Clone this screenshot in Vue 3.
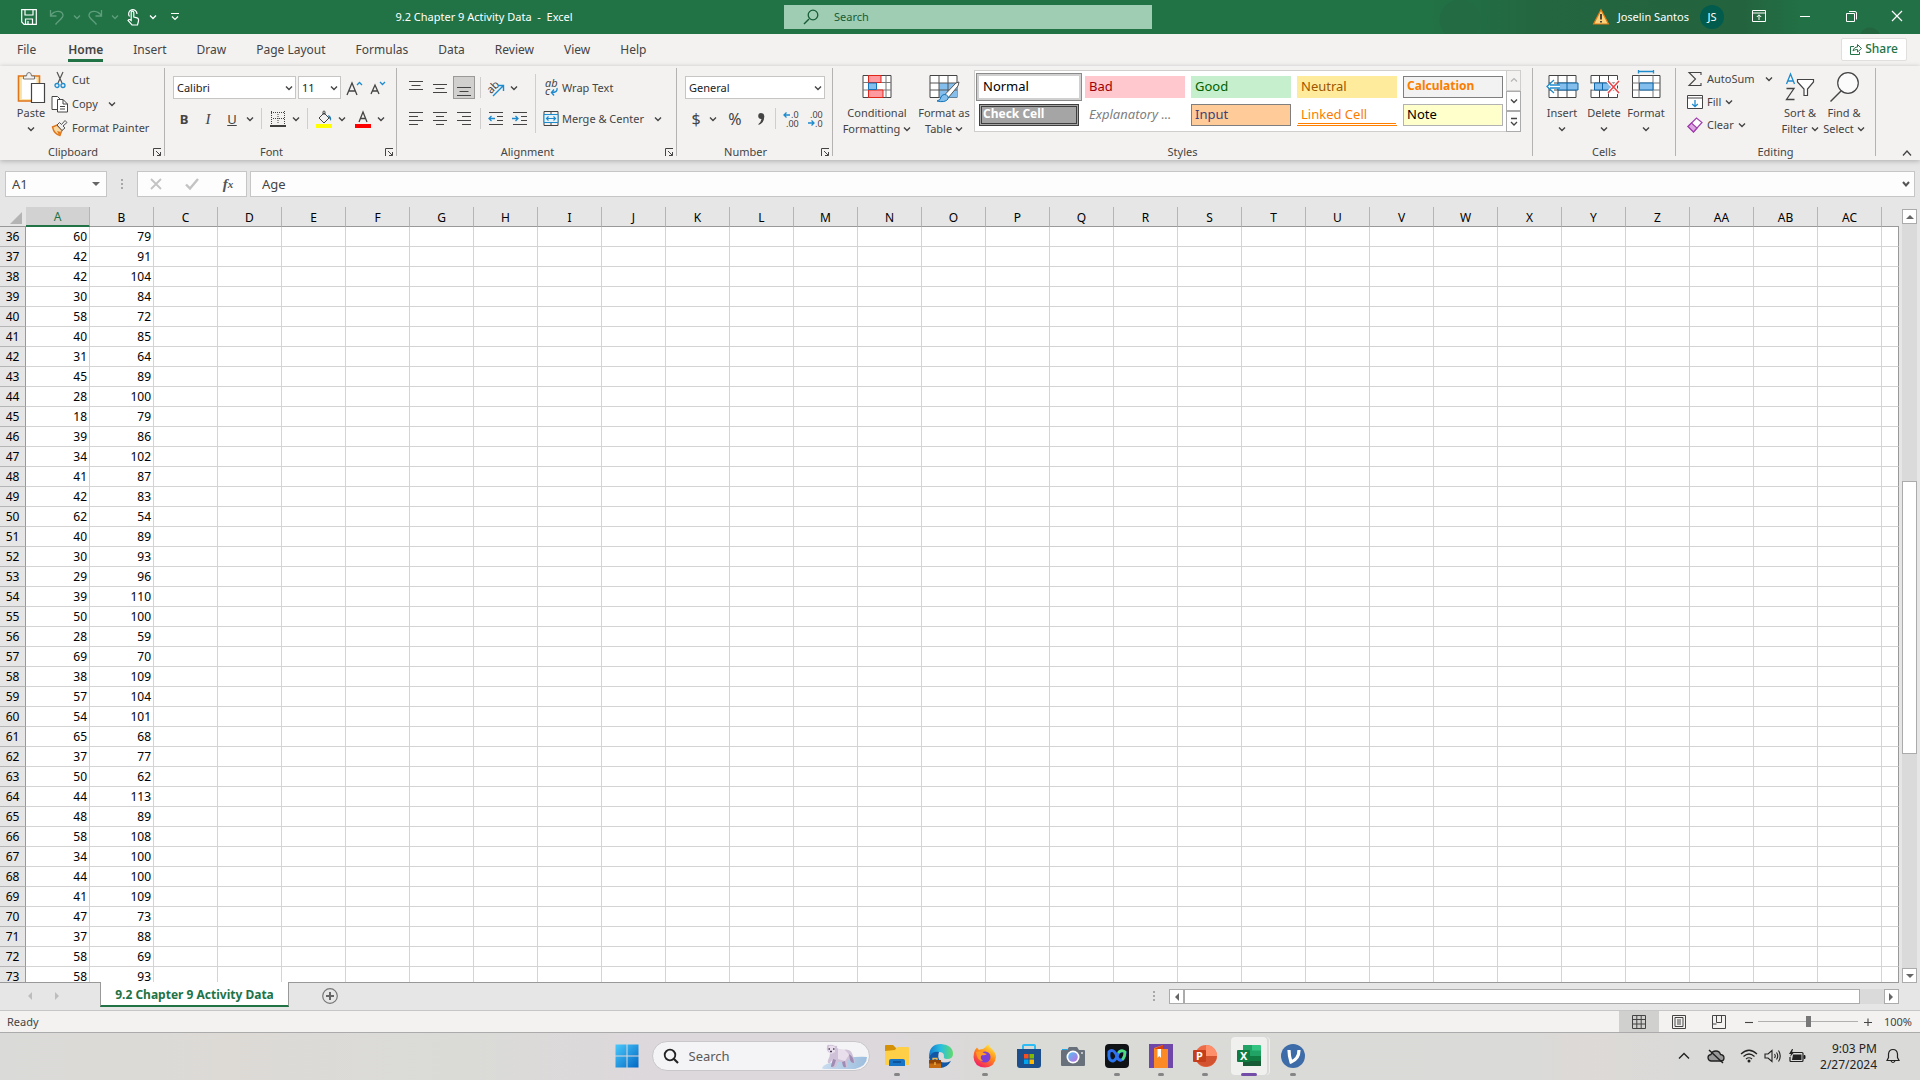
<script setup>
import { ref, h } from 'vue'

const K = '#444444'
const B = '#1e8bcd'
const line = (d, c = K, w = 1, extra = '') => `<path d="${d}" fill="none" stroke="${c}" stroke-width="${w}" ${extra}/>`

// Each icon is [width, height, svg markup].
const icons = {
  chev: [8, 8, line('M1 2.500L4 5.500L7 2.500', K, 1.4)],
  chevUp: [8, 8, line('M1 5.500L4 2.500L7 5.500', '#b5b5b5', 1.2)],
  chevMore: [8, 10, line('M1 1.500H7M1 5L4 8L7 5', K, 1.3)],
  save: [16, 16, line('M.7 .7H15.300V15.300H3L.7 13ZM4 .7V6H12V.7M4.500 15V10H11.500V15M7 12V15', '#fff', 1.2)],
  undo: [16, 16, line('M1.500 1V7H7.500M1.500 7C5 1 13 1 14 6C14.500 9 9 12 6.500 15.500', '#5f9e7c', 1.3)],
  redo: [16, 16, line('M14.500 1V7H8.500M14.500 7C11 1 3 1 2 6C1.500 9 7 12 9.500 15.500', '#5f9e7c', 1.3)],
  touch: [14, 18, line('M3.500 8.500A4.200 4.200 0 1 1 11 6M5.200 11V4.500A1.300 1.300 0 0 1 7.800 4.500V9L11 9.800Q13 10.500 12.500 13L11.500 17H6L2 12.500Q3 10.500 5.200 12.500V11', '#fff', 1.2)],
  chevW: [8, 8, line('M1 2.500L4 5.500L7 2.500', '#fff', 1.3)],
  chevDim: [8, 8, line('M1 2.500L4 5.500L7 2.500', '#5f9e7c', 1.3)],
  custom: [8, 10, line('M0 1.500H8M1 4.500L4 7.500L7 4.500', '#fff', 1.2)],
  searchG: [16, 16, line('M6 10L1 15', '#185c37', 1.4) + '<circle cx="10" cy="6" r="4.800" fill="none" stroke="#185c37" stroke-width="1.300"/>'],
  warn: [16, 16, '<path d="M8 .8L15.400 15H.6Z" fill="#fbd27a" stroke="#e07a14" stroke-width="1.200"/><path d="M8 5V10.500M8 12V13.500" stroke="#333" stroke-width="1.800"/>'],
  ribbonOpt: [14, 12, line('M.5 .5H13.500V11.500H.5ZM.5 3H13.500M7 10V5M4.800 7L7 4.800L9.200 7', '#fff')],
  min: [10, 10, line('M0 5.500H10', '#fff')],
  restore: [11, 11, line('M.5 2.500H8.500V10.500H.5ZM3 .5H9Q10.500 .5 10.500 2V8.500', '#fff')],
  close: [10, 10, line('M0 0L10 10M10 0L0 10', '#fff', 1.2)],
  share: [12, 12, line('M4 3.500H.5V11.500H9.500V9M3 8C3.500 5 5.500 4 7.500 4V1.500L11.500 5.500L7.500 9V6.500C5.500 6.500 4 7 3 8Z', '#217346')],
  paste: [28, 32, '<path d="M1.500 5H22.500V30H1.500Z" fill="#fbe3ac" stroke="#e0761a" stroke-width="1.600"/><path d="M5 8H19.500V28H5Z" fill="#fff"/><path d="M6.500 8V5H9.500Q9.500 1.500 12 1.500T14.500 5H17.500V8Z" fill="#f3f2f1" stroke="#777"/><path d="M14.500 12.500H27.500V31.500H14.500Z" fill="#fff" stroke="#444" stroke-width="1.200"/>'],
  cut: [14, 18, line('M4 1L9 12M10 1L5 12', '#555', 1.2) + '<circle cx="4" cy="14.500" r="2" fill="none" stroke="#1e8bcd" stroke-width="1.300"/><circle cx="10" cy="14.500" r="2" fill="none" stroke="#1e8bcd" stroke-width="1.300"/>'],
  copy: [18, 18, '<path d="M1 1.500H6.500L9.500 4.500V14.500H1Z" fill="#fff" stroke="#444"/><path d="M6.500 4.500H12L16.500 9V17H6.500Z" fill="#fff" stroke="#444"/><path d="M12 4.500V9H16.500M9 11.500H14M9 14H14" fill="none" stroke="#444"/>'],
  painter: [18, 18, '<path d="M1.500 8L6 6L11 11L9 16.500Q3 15 1.500 8Z" fill="#fbd9a0" stroke="#e0761a" stroke-width="1.400"/><path d="M6 12L8 16L10 13Z" fill="#e0761a"/><path d="M6 6L8.500 3.500L10.500 5.500L14 1.500L16 3.500L12 7L14 9L11 11.500Z" fill="#eee" stroke="#555"/>'],
  launch: [10, 10, line('M1.500 9V1.500H9M4 4L8.500 8.500M8.500 5V8.500H5')],
  growA: [16, 16, line('M1 15L6 3L11 15M3 11H9', K, 1.3) + line('M11 5L13.500 2.500L16 5', B, 1.3)],
  shrinkA: [16, 16, line('M1 14L5 5L9 14M2.500 11H7.500', K, 1.3) + line('M10 2L12.500 4.500L15 2', B, 1.3)],
  borders: [16, 16, line('M1.500 0V14M14.500 0V14M1 1.500H15M8 3V13M3 7.500H14', K, 1, 'stroke-dasharray="1 1"') + line('M0 15H16', '#111', 1.6)],
  fill: [18, 18, line('M4 8L9 3L14 8L9 13ZM8 5V2Q8 1 9 1T10 2V5') + '<path d="M13 5Q17 6 16 11L14 8Z" fill="#1e78b4"/><path d="M1 14H17V18H1Z" fill="#ffff00"/>'],
  fontColor: [18, 18, line('M5 12L9 2L13 12M6.500 8.500H11.500', K, 1.3) + '<path d="M1 14H17V18H1Z" fill="#f00"/>'],
  alTop: [16, 16, line('M1 1.500H15M3.500 5.500H12.500M1 9.500H15')],
  alMid: [16, 16, line('M1 4.500H15M3.500 8.500H12.500M1 12.500H15')],
  alBot: [16, 16, line('M1 7.500H15M3.500 11.500H12.500M1 15.500H15')],
  alL: [16, 16, line('M1 1.500H15M1 5.500H10M1 9.500H15M1 13.500H10')],
  alC: [16, 16, line('M1 1.500H15M4 5.500H12M1 9.500H15M4 13.500H12')],
  alR: [16, 16, line('M1 1.500H15M6 5.500H15M1 9.500H15M6 13.500H15')],
  outdent: [16, 16, line('M1 1.500H15M9 5.500H15M9 9.500H15M1 13.500H15') + line('M7 7.500H1M3.500 5L1 7.500L3.500 10', B, 1.3)],
  indent: [16, 16, line('M1 1.500H15M9 5.500H15M9 9.500H15M1 13.500H15') + line('M0 7.500H6M3.500 5L6 7.500L3.500 10', B, 1.3)],
  orient: [18, 18, '<text x="0" y="12" font-size="11" fill="#444" transform="rotate(-45 6 9)" font-family="Noto Sans">ab</text>' + line('M6 17L16 7M11 6.500H16.500V12', B, 1.4)],
  wrap: [18, 20, '<text font-size="11" fill="#444" font-family="Noto Sans"><tspan x="3" y="9">ab</tspan><tspan x="3" y="17">c</tspan></text>' + line('M15 10Q16 14.500 9.500 14.500M12 11.500L9.500 14.500L12 17.500', B, 1.4)],
  merge: [18, 18, line('M2 1.500H16V15.500H2ZM9 1.500V5M9 12V15.500') + '<path d="M2 4.500H16V12.500H2Z" fill="#e6f2fa" stroke="#1e8bcd"/>' + line('M4.500 8.500H13.500M6.500 6.500L4.500 8.500L6.500 10.500M11.500 6.500L13.500 8.500L11.500 10.500', B, 1.2)],
  comma: [10, 16, '<path d="M5 2A3 3 0 1 0 5.500 8Q5 11 2.500 13V14Q8.500 12 8.300 5Q8 2 5 2Z" fill="#444"/>'],
  decUp: [18, 18, line('M8 5H2M4.500 2.500L2 5L4.500 7.500', B, 1.3) + '<text font-size="9" fill="#444" font-family="Noto Sans"><tspan x="9" y="8">.0</tspan><tspan x="4" y="17">.00</tspan></text>'],
  decDn: [18, 18, line('M2 13H8M5.500 10.500L8 13L5.500 15.500', B, 1.3) + '<text font-size="9" fill="#444" font-family="Noto Sans"><tspan x="4" y="8">.00</tspan><tspan x="9" y="17">.0</tspan></text>'],
  condFmt: [32, 32, '<path d="M2 4.500H30V26.500H2Z" fill="#fff" stroke="#444"/><path d="M2 11.500H30M2 19H30M25 4.500V26.500M7.500 4.500V26.500" stroke="#777" fill="none"/><path d="M7.500 4.500H20V11.500H7.500ZM7.500 19H22V26.500H7.500Z" fill="#ff9aa0" stroke="#e0251b"/><path d="M7.500 12H15.500V18.500H7.500Z" fill="#83beec" stroke="#1273b8"/>'],
  fmtTable: [32, 32, '<path d="M2 4.500H29V26.500H2Z" fill="#fff" stroke="#444"/><path d="M11 12H29V26.500H11Z" fill="#83beec"/><path d="M2 12H29M2 19H29M11 4.500V26.500M20 4.500V26.500" stroke="#555" fill="none"/><path d="M28 12L31 11L30 15L20 27L16.500 24Z" fill="#fff" stroke="#555"/><path d="M16.500 23.500Q21 24 20 28Q17 32 9 30Q13 29 13 26Q14 23.500 16.500 23.500Z" fill="#83beec" stroke="#1273b8"/>'],
  insert: [34, 32, '<path d="M4 4.500H31V26.500H4Z" fill="#fff" stroke="#444"/><path d="M13 4.500V26.500M22 4.500V26.500M4 12H31M4 19H31" stroke="#444" fill="none"/><path d="M13 12H33V19H13Z" fill="#83beec" stroke="#0f66a8"/><path d="M22 12V19" stroke="#0f66a8"/><path d="M2 15.500L9 9V13.500H15V17.500H9V22Z" fill="#fff"/>' + line('M15 14H5M15 17H5M9 9L2 15.500L9 22', B, 1.3)],
  del: [32, 32, '<path d="M3 4.500H29.500V26.500H3Z" fill="#fff" stroke="#444"/><path d="M11.500 4.500V26.500M20.500 4.500V26.500M3 12H29M3 19H29" stroke="#444" fill="none"/><path d="M0 12.500H6V18.500H0Z" fill="#f3f2f1"/><path d="M6.500 12H23V19H6.500Z" fill="#83beec" stroke="#0f66a8"/><path d="M14.500 12V19" stroke="#0f66a8"/><path d="M20 10L31 22M31 10L20 22" stroke="#fff" stroke-width="4"/>' + line('M20 10L31 22M31 10L20 22', '#e8474a', 1.6)],
  fmtCells: [32, 32, '<path d="M2.500 4.500H30V26.500H2.500Z" fill="#fff" stroke="#444"/><path d="M9 4.500V26.500M23 4.500V26.500M2.500 12H30M2.500 19H30" stroke="#777" fill="none"/><path d="M9.500 12H23V19H9.500Z" fill="#83beec" stroke="#0f66a8"/>' + line('M8.500 .5H23.500M8.500 -1V2.500M23.500 -1V2.500', B, 1.3)],
  sum: [16, 16, line('M14 4V1.500H2L8.500 8L2 14.500H14V12', K, 1.1)],
  fillDn: [16, 16, '<path d="M.5 1.500H15.500V14.500H.5Z" fill="#fff" stroke="#444"/><path d="M.5 4H15.500" stroke="#444"/>' + line('M8 6V12.500M5.200 10L8 12.700L10.800 10', B, 1.3)],
  clear: [16, 16, '<path d="M1 9.500L9.500 1L15 5.500L6.500 15Z" fill="#fff" stroke="#a33fae" stroke-width="1.200"/><path d="M1 9.500L4.500 6L10 11L6.500 15Z" fill="#dba7e0" stroke="#a33fae" stroke-width="1.200"/>'],
  sort: [32, 32, line('M2.500 13L6.500 3L10.500 13M4 10H9', B, 1.3) + line('M2.500 17.500H10L2.500 28.500H10.500', K, 1.3) + '<path d="M13.500 8.500H29.500V11L23.500 18V24.500H20V18L13.500 11Z" fill="#fff" stroke="#444" stroke-width="1.200"/>'],
  find: [32, 32, '<circle cx="20" cy="12" r="10.300" fill="#fbfbfb" stroke="#444" stroke-width="1.200"/>' + line('M13 20L2.500 30.500', K, 1.4)],
  caretUp: [10, 8, line('M1 6.500L5 2L9 6.500', K, 1.3)],
  nameCaret: [8, 6, '<path d="M0 1H8L4 5Z" fill="#666"/>'],
  cancel: [12, 12, line('M1 1L11 11M11 1L1 11', '#c3c3c3', 1.8)],
  check: [14, 12, line('M1 6.500L5 10.500L13 1', '#c3c3c3', 2.4)],
  fbChev: [8, 8, line('M1 2L4 5.500L7 2', '#555', 2)],
  triU: [8, 6, '<path d="M0 5H8L4 1Z" fill="#666"/>'],
  triD: [8, 6, '<path d="M0 1H8L4 5Z" fill="#666"/>'],
  triL: [5, 8, '<path d="M5 0V8L1 4Z" fill="#666"/>'],
  triR: [5, 8, '<path d="M0 0V8L4 4Z" fill="#666"/>'],
  navL: [5, 8, '<path d="M5 0V8L1 4Z" fill="#bdbdbd"/>'],
  navR: [5, 8, '<path d="M0 0V8L4 4Z" fill="#bdbdbd"/>'],
  plusC: [16, 16, '<circle cx="8" cy="8" r="7.300" fill="none" stroke="#777" stroke-width="1.200"/><path d="M8 4V12M4 8H12" stroke="#666" stroke-width="2"/>'],
  vNormal: [14, 14, line('M.5 .5H13.500V13.500H.5ZM.5 4.500H13.500M.5 9H13.500M4.800 .5V13.500M9.200 .5V13.500')],
  vPage: [14, 14, line('M.5 .5H13.500V13.500H.5ZM3 2.500H11V11.500H3ZM5 5H9M5 7H9M5 9H9')],
  vBreak: [14, 14, line('M.5 .5H13.500V13.500H.5ZM4.500 .5V7.500H9.500V.5M.5 9H4.500')],
  zMinus: [8, 8, line('M0 4.500H8', K, 1.1)],
  zPlus: [8, 8, line('M0 4.500H8M4 .5V8', K, 1.1)],
  win: [24, 24, '<defs><linearGradient id="wg" x1="0" y1="0" x2="1" y2="1"><stop offset="0" stop-color="#4cc9fb"/><stop offset="1" stop-color="#0067c4"/></linearGradient></defs><path d="M.5 .5H11.500V11.500H.5ZM12.500 .5H23.500V11.500H12.500ZM.5 12.500H11.500V23.500H.5ZM12.500 12.500H23.500V23.500H12.500Z" fill="url(#wg)"/>'],
  searchT: [16, 16, '<circle cx="7" cy="7" r="5.300" fill="none" stroke="#222" stroke-width="1.800"/>' + line('M11 11L15 15', '#222', 2.200)],
  bear: [48, 28, '<defs><linearGradient id="bg1" x1="0" x2="1"><stop offset="0" stop-color="#c9dcef"/><stop offset="1" stop-color="#9dbede"/></linearGradient></defs><path d="M1 26Q3 21 16 20Q28 14 46 15Q46 24 34 27H5Q1 27 1 26Z" fill="url(#bg1)"/><path d="M6 5Q6 2 8 3Q11 2 14 4Q17 3 16 6Q17 7 22 8Q30 6 32 14Q35 19 33 21Q30 21 29 18Q27 17 26 19L27 24Q24 27 22 24L21 20H17L15 25Q11 27 10 24L12 17L9 21Q6 22 7 18Q9 15 9 11Q5 9 6 5Z" fill="#cfc2d8"/><path d="M17 7Q25 6 28 13L24 19L17 17ZM8 4Q12 3 14 5L14 10L10 12Q6 9 8 4Z" fill="#e9dfec"/><path d="M28 12Q33 15 33 21Q30 21 29 18ZM12 17L15 18L13 24Q10 26 10 24ZM21 20L24 19L25 25Q23 26 22 24Z" fill="#9f8bb3"/><path d="M7.500 7H9M12 7H13.500M9 9.500H11" stroke="#4c3c5b" stroke-width="1.300"/>'],
  folder: [24, 24, '<path d="M0 2Q0 1 1 1H8L11 4V8H0Z" fill="#d49107"/><path d="M0 7L10 6L12 3H23Q24 3 24 4V21H0Z" fill="#ffcf48"/><path d="M4 22V17Q4 15 6 15H18Q20 15 20 17V22Z" fill="#1673c6"/><path d="M8 18H16" stroke="#0b4f95" stroke-width="1.600"/>'],
  edge: [24, 24, '<defs><linearGradient id="eg" x1="0" x2="1"><stop offset="0" stop-color="#1279cf"/><stop offset=".5" stop-color="#2ac0df"/><stop offset="1" stop-color="#62d96b"/></linearGradient></defs><path d="M0 13Q0 0 12 0Q24 1 24 10Q24 15 18 15Q14 15 15 12Q15 8 10 8Q3 8 0 13Z" fill="url(#eg)"/><path d="M0 13Q3 7 10 8Q8 13 11 17Q15 20 22 17Q18 24 11 24Q1 23 0 13Z" fill="#1257a5"/><path d="M0 16H12V24H0Z" fill="#c66c13"/><path d="M0 16H12V19.500H0Z" fill="#8e4308"/><path d="M4 16V14.500H8V16M6 18V21" stroke="#f3b94a" fill="none" stroke-width="1.300"/>'],
  firefox: [24, 24, '<defs><linearGradient id="fg" x1=".8" y1="0" x2=".2" y2="1"><stop offset="0" stop-color="#fff14a"/><stop offset=".45" stop-color="#ff8a16"/><stop offset="1" stop-color="#f1146e"/></linearGradient></defs><path d="M2 6L4 3.500L6 6Q8 5 10 5Q13 3 15 0Q17 4 19 5Q23 9 23 13Q22 23 12 23.500Q1 23 .5 13Q.5 9 2 6Z" fill="url(#fg)"/><circle cx="12" cy="13" r="5.500" fill="#7b3fd6"/><path d="M3 8Q8 6 11 9L14 10Q11 12 9 11Q6 14 10 17Q4 17 3 8Z" fill="#ff9a26"/>'],
  store: [24, 24, '<path d="M6 6V2Q6 1 7 1H17Q18 1 18 2V6" fill="none" stroke="#2dbdf4" stroke-width="2"/><path d="M0 5H24V21Q24 24 21 24H3Q0 24 0 21Z" fill="#1d4f8c"/><path d="M7 10H11.500V14.500H7Z" fill="#f25022"/><path d="M12.500 10H17V14.500H12.500Z" fill="#7fba00"/><path d="M7 15.500H11.500V20H7Z" fill="#00a4ef"/><path d="M12.500 15.500H17V20H12.500Z" fill="#ffb900"/>'],
  camera: [24, 24, '<defs><linearGradient id="cg" x1="0" y1="0" x2="1" y2="1"><stop offset="0" stop-color="#51c1f5"/><stop offset="1" stop-color="#c36be0"/></linearGradient></defs><path d="M1 5H6V8H1Z" fill="#22a5e0"/><path d="M1 6H6L8 3H16L18 6H23Q24 6 24 7V21Q24 22 23 22H1Q0 22 0 21V7Q0 6 1 6Z" fill="#67707b"/><circle cx="12" cy="13" r="6.500" fill="#fff"/><circle cx="12" cy="13" r="4.800" fill="url(#cg)"/><path d="M20 9H22" stroke="#ddd" stroke-width="1.500"/>'],
  webex: [24, 24, '<rect width="24" height="24" rx="4" fill="#101316"/><path d="M4 8Q3 17 8 17Q11 16 13 10Q14 7 17 7" fill="none" stroke="#2a76f0" stroke-width="3" stroke-linecap="round"/><path d="M5 7Q8 5 11 10Q13 17 16 16Q20 15 20 8" fill="none" stroke="#2f6ff2" stroke-width="3" stroke-linecap="round"/><path d="M14 8Q17 5 20 8Q20 12 18 15" fill="none" stroke="#50dc7a" stroke-width="2.600" stroke-linecap="round"/>'],
  book: [24, 24, '<path d="M0 0H24V24H0Z" fill="#6f47a8"/><path d="M5 4L14 1V5H19V24H5Z" fill="#fb8a24"/><path d="M5 5L14 1V5Z" fill="#d9420f"/><path d="M8.500 5H12V14L10.200 12L8.500 14Z" fill="#fff"/>'],
  ppt: [24, 24, '<circle cx="13" cy="12" r="11" fill="#ed6c47"/><path d="M13 1A11 11 0 0 1 24 12H13Z" fill="#ff8f6b"/><path d="M24 12A11 11 0 0 1 3 16V12Z" fill="#d35230"/><rect y="6" width="13" height="12" rx="1" fill="#c43e1c"/><text x="3" y="16" font-size="11" font-weight="700" fill="#fff" font-family="Noto Sans">P</text>'],
  xl: [24, 24, '<path d="M6 1H15V12H6Z" fill="#21a366"/><path d="M15 1H23Q24 1 24 2V7H15Z" fill="#33c481"/><path d="M15 6.500H24V12H15Z" fill="#21a366"/><path d="M6 12H15V17H6Z" fill="#107c41"/><path d="M15 12H24V17H15Z" fill="#107c41"/><path d="M6 17H24V22H6Z" fill="#185c37"/><rect y="6" width="13" height="12" rx="1" fill="#107c41"/><text x="3" y="16" font-size="11" font-weight="700" fill="#fff" font-family="Noto Sans">X</text>'],
  vapp: [24, 24, '<circle cx="12" cy="12" r="12" fill="#3e6ca8"/><path d="M8 6Q8 12 10 18Q18 15 18 6" fill="none" stroke="#fff" stroke-width="3.200"/>'],
  tChev: [12, 8, line('M1 6.500L6 1.500L11 6.500', '#222', 1.4)],
  cloud: [18, 16, '<path d="M4 13Q1 12.500 1 9.500Q1 7 4 6.500Q5 3 9 3Q12.500 3 13.500 6.500Q17 7 17 10Q17 13 14 13Z" fill="#999" stroke="#222" stroke-width="1.300"/>' + line('M2 2L16 15', '#222', 1.5)],
  wifi: [18, 14, line('M1 5Q9 -2.500 17 5M3.500 7.500Q9 2.500 14.500 7.500M6 10Q9 7.500 12 10', '#222', 1.2) + '<circle cx="9" cy="12" r="1.500" fill="#222"/>'],
  sound: [18, 14, line('M1 5V9H4L8 12.500V1.500L4 5ZM10.500 5Q12 7 10.500 9M12.500 3.500Q15 7 12.500 10.500M14.500 1.500Q18 7 14.500 12.500', '#222', 1.1)],
  battery: [18, 14, '<path d="M4 3.500H14Q15 3.500 15 4.500V11.500Q15 12.500 14 12.500H3Q2 12.500 2 11.500V8" fill="none" stroke="#222" stroke-width="1.200"/><path d="M5 5.500H13.500V11H4Z" fill="#222"/><path d="M16 6.500H17V9.500H16Z" stroke="#222"/><path d="M4 0L1 5H3L2 8L6 3.500H4L5 0Z" fill="#222"/>'],
  bell: [14, 16, line('M1 12.500L2.500 9.500V6Q3 1.500 7 1.500T11.500 6V9.500L13 12.500ZM5 13Q7 16 9 13', '#222', 1.2)]
}

const Icon = ({ n }) => {
  const [width, height, innerHTML] = icons[n]
  return h('svg', { class: 'icon', width, height, viewBox: `0 0 ${width} ${height}`, 'aria-hidden': 'true', innerHTML })
}
Icon.props = ['n']

const tabs = ['File', 'Home', 'Insert', 'Draw', 'Page Layout', 'Formulas', 'Data', 'Review', 'View', 'Help']
const styles = [
  ['Normal', 'normal'], ['Bad', 'bad'], ['Good', 'good'], ['Neutral', 'neutral'], ['Calculation', 'calc'],
  ['Check Cell', 'checkcell'], ['Explanatory ...', 'expl'], ['Input', 'input'], ['Linked Cell', 'linked'], ['Note', 'note']
]
const cols = [...'ABCDEFGHIJKLMNOPQRSTUVWXYZ', 'AA', 'AB', 'AC']
const a = [60, 42, 42, 30, 58, 40, 31, 45, 28, 18, 39, 34, 41, 42, 62, 40, 30, 29, 39, 50, 28, 69, 38, 57, 54, 65, 37, 50, 44, 48, 58, 34, 44, 41, 47, 37, 58, 58]
const b = [79, 91, 104, 84, 72, 85, 64, 89, 100, 79, 86, 102, 87, 83, 54, 89, 93, 96, 110, 100, 59, 70, 109, 104, 101, 68, 77, 62, 113, 89, 108, 100, 100, 109, 73, 88, 69, 93]
const rows = a.map((v, i) => ({ n: 36 + i, a: v, b: b[i] }))
const apps = [
  ['folder', 'File Explorer', 1], ['edge', 'Edge', 0], ['firefox', 'Firefox', 1], ['store', 'Store', 0], ['camera', 'Camera', 0],
  ['webex', 'Webex', 1], ['book', 'Reader', 1], ['ppt', 'PowerPoint', 1], ['xl', 'Excel', 2], ['vapp', 'V', 1]
]
const zoom = ref(50)
const formula = ref('Age')
const cellName = ref('A1')
</script>

<template>
  <div class="desktop">
    <header class="titlebar">
      <div class="tleft">
        <div class="qat">
          <button class="q" aria-label="Save"><Icon n="save" /></button>
          <button class="q" aria-label="Undo"><Icon n="undo" /></button>
          <button class="qc" aria-label="Undo options"><Icon n="chevDim" /></button>
          <button class="q" aria-label="Redo"><Icon n="redo" /></button>
          <button class="qc" aria-label="Redo options"><Icon n="chevDim" /></button>
          <button class="q" aria-label="Touch mode"><Icon n="touch" /></button>
          <button class="qc" aria-label="Touch options"><Icon n="chevW" /></button>
          <button class="qx" aria-label="Customize toolbar"><Icon n="custom" /></button>
        </div>
        <h1 class="doc">9.2 Chapter 9 Activity Data&nbsp; -&nbsp; Excel</h1>
      </div>
      <label class="tsearch"><Icon n="searchG" /><input type="text" placeholder="Search" aria-label="Search"></label>
      <div class="tright">
        <Icon n="warn" />
        <span class="user">Joselin Santos</span>
        <span class="avatar">JS</span>
        <button class="wbtn" aria-label="Ribbon display options"><Icon n="ribbonOpt" /></button>
        <button class="wbtn" aria-label="Minimize"><Icon n="min" /></button>
        <button class="wbtn" aria-label="Restore"><Icon n="restore" /></button>
        <button class="wbtn" aria-label="Close"><Icon n="close" /></button>
      </div>
    </header>

    <nav class="tabs">
      <button v-for="t in tabs" :key="t" class="tab" :class="{ on: t === 'Home' }">{{ t }}</button>
      <button class="share"><Icon n="share" />Share</button>
    </nav>

    <section class="ribbon">
      <div class="group g-clip">
        <div class="body">
          <button class="big paste"><Icon n="paste" /><span>Paste</span><span class="bl"><Icon n="chev" /></span></button>
          <div class="list r24">
            <button class="row"><i><Icon n="cut" /></i>Cut</button>
            <button class="row"><i><Icon n="copy" /></i>Copy<Icon n="chev" class="far" /></button>
            <button class="row"><i><Icon n="painter" /></i>Format Painter</button>
          </div>
        </div>
        <div class="foot"><span>Clipboard</span><button aria-label="Clipboard settings"><Icon n="launch" /></button></div>
      </div>
      <span class="div"></span>
      <div class="group g-font">
        <div class="body two">
          <div class="line">
            <label class="sel fname"><select aria-label="Font"><option>Calibri</option></select><Icon n="chev" /></label>
            <label class="sel fsize"><select aria-label="Font size"><option>11</option></select><Icon n="chev" /></label>
            <button class="ic" aria-label="Increase font size"><Icon n="growA" /></button>
            <button class="ic" aria-label="Decrease font size"><Icon n="shrinkA" /></button>
          </div>
          <div class="line">
            <button class="ic"><b>B</b></button><button class="ic"><em>I</em></button><button class="ic"><u>U</u></button>
            <button class="ch" aria-label="Underline options"><Icon n="chev" /></button><span class="sep"></span>
            <button class="ic" aria-label="Borders"><Icon n="borders" /></button><button class="ch" aria-label="Border options"><Icon n="chev" /></button><span class="sep"></span>
            <button class="ic" aria-label="Fill color"><Icon n="fill" /></button><button class="ch" aria-label="Fill options"><Icon n="chev" /></button>
            <button class="ic fc" aria-label="Font color"><Icon n="fontColor" /></button><button class="ch" aria-label="Font color options"><Icon n="chev" /></button>
          </div>
        </div>
        <div class="foot"><span>Font</span><button aria-label="Font settings"><Icon n="launch" /></button></div>
      </div>
      <span class="div"></span>
      <div class="group g-align">
        <div class="body">
          <div class="two">
            <div class="line">
              <button class="ic" aria-label="Top align"><Icon n="alTop" /></button>
              <button class="ic" aria-label="Middle align"><Icon n="alMid" /></button>
              <button class="ic on" aria-label="Bottom align"><Icon n="alBot" /></button><span class="sep s3"></span>
              <button class="ic" aria-label="Orientation"><Icon n="orient" /></button><button class="ch" aria-label="Orientation options"><Icon n="chev" /></button>
            </div>
            <div class="line">
              <button class="ic" aria-label="Align left"><Icon n="alL" /></button>
              <button class="ic" aria-label="Center"><Icon n="alC" /></button>
              <button class="ic" aria-label="Align right"><Icon n="alR" /></button><span class="sep s3"></span>
              <button class="ic" aria-label="Decrease indent"><Icon n="outdent" /></button>
              <button class="ic" aria-label="Increase indent"><Icon n="indent" /></button>
            </div>
          </div>
          <span class="tallsep"></span>
          <div class="two">
            <button class="row line"><i><Icon n="wrap" /></i>Wrap Text</button>
            <button class="row line"><i><Icon n="merge" /></i>Merge &amp; Center<Icon n="chev" class="far" /></button>
          </div>
        </div>
        <div class="foot"><span>Alignment</span><button aria-label="Alignment settings"><Icon n="launch" /></button></div>
      </div>
      <span class="div"></span>
      <div class="group g-num">
        <div class="body two">
          <div class="line"><label class="sel fnum"><select aria-label="Number format"><option>General</option></select><Icon n="chev" /></label></div>
          <div class="line">
            <button class="ic sym">$</button><button class="ch" aria-label="Currency options"><Icon n="chev" /></button>
            <button class="ic sym pct">%</button><button class="ic cm" aria-label="Comma style"><Icon n="comma" /></button><span class="sep s3"></span>
            <button class="ic" aria-label="Increase decimal"><Icon n="decUp" /></button><button class="ic" aria-label="Decrease decimal"><Icon n="decDn" /></button>
          </div>
        </div>
        <div class="foot"><span>Number</span><button aria-label="Number settings"><Icon n="launch" /></button></div>
      </div>
      <span class="div"></span>
      <div class="group g-styles">
        <div class="body">
          <button class="big w74"><Icon n="condFmt" /><span>Conditional</span><span class="bl">Formatting<Icon n="chev" /></span></button>
          <button class="big w60"><Icon n="fmtTable" /><span>Format as</span><span class="bl">Table<Icon n="chev" /></span></button>
          <div class="gallery">
            <div class="swatches"><button v-for="s in styles" :key="s[0]" class="sw" :class="s[1]">{{ s[0] }}</button></div>
            <div class="gscroll">
              <button class="dis" aria-label="Scroll up"><Icon n="chevUp" /></button>
              <button aria-label="Scroll down"><Icon n="chev" /></button>
              <button aria-label="More styles"><Icon n="chevMore" /></button>
            </div>
          </div>
        </div>
        <div class="foot"><span>Styles</span></div>
      </div>
      <span class="div"></span>
      <div class="group g-cells">
        <div class="body">
          <button class="big w42"><Icon n="insert" /><span>Insert</span><span class="bl"><Icon n="chev" /></span></button>
          <button class="big w42"><Icon n="del" /><span>Delete</span><span class="bl"><Icon n="chev" /></span></button>
          <button class="big w42"><Icon n="fmtCells" /><span>Format</span><span class="bl"><Icon n="chev" /></span></button>
        </div>
        <div class="foot"><span>Cells</span></div>
      </div>
      <span class="div"></span>
      <div class="group g-edit">
        <div class="body">
          <div class="list r23">
            <button class="row"><i><Icon n="sum" /></i>AutoSum<Icon n="chev" class="far" /></button>
            <button class="row"><i><Icon n="fillDn" /></i>Fill<Icon n="chev" class="near" /></button>
            <button class="row"><i><Icon n="clear" /></i>Clear<Icon n="chev" class="near" /></button>
          </div>
          <button class="big w46"><Icon n="sort" /><span>Sort &amp;</span><span class="bl">Filter<Icon n="chev" /></span></button>
          <button class="big w42"><Icon n="find" /><span>Find &amp;</span><span class="bl">Select<Icon n="chev" /></span></button>
        </div>
        <div class="foot"><span>Editing</span></div>
      </div>
      <span class="div"></span>
      <button class="collapse" aria-label="Collapse ribbon"><Icon n="caretUp" /></button>
    </section>

    <section class="fbar">
      <label class="namebox"><input v-model="cellName" type="text" aria-label="Name box"><Icon n="nameCaret" /></label>
      <span class="dots"><s></s><s></s><s></s></span>
      <div class="fbtns">
        <button aria-label="Cancel"><Icon n="cancel" /></button>
        <button aria-label="Enter"><Icon n="check" /></button>
        <button class="fx" aria-label="Insert function">f<sub>x</sub></button>
      </div>
      <label class="formula"><input v-model="formula" type="text" aria-label="Formula"><Icon n="fbChev" /></label>
    </section>

    <main class="sheet">
      <div class="gridwrap">
        <table>
          <colgroup><col class="c0"><col v-for="c in cols" :key="c" class="c1"><col></colgroup>
          <thead>
            <tr><th class="corner"><svg width="12" height="12"><path d="M12 0V12H0Z" fill="#b4b4b4" /></svg></th><th v-for="c in cols" :key="c" scope="col" :class="{ act: c === 'A' }">{{ c }}</th><th class="end"></th></tr>
          </thead>
          <tbody>
            <tr v-for="r in rows" :key="r.n"><th scope="row">{{ r.n }}</th><td>{{ r.a }}</td><td>{{ r.b }}</td><td v-for="c in 28" :key="c"></td></tr>
          </tbody>
        </table>
      </div>
      <div class="vscroll">
        <button class="sb" aria-label="Scroll up"><Icon n="triU" /></button>
        <div class="vtrack"><span class="before"></span><span class="vthumb"></span><span class="after"></span></div>
        <button class="sb" aria-label="Scroll down"><Icon n="triD" /></button>
      </div>
    </main>

    <section class="sheetbar">
      <div class="navs"><button aria-label="Previous sheet"><Icon n="navL" /></button><button aria-label="Next sheet"><Icon n="navR" /></button></div>
      <button class="stab">9.2 Chapter 9 Activity Data</button>
      <button class="add" aria-label="New sheet"><Icon n="plusC" /></button>
      <span class="dots"><s></s><s></s><s></s></span>
      <div class="hscroll">
        <button class="sb" aria-label="Scroll left"><Icon n="triL" /></button>
        <div class="htrack"><span class="hthumb"></span></div>
        <button class="sb" aria-label="Scroll right"><Icon n="triR" /></button>
      </div>
    </section>

    <section class="status">
      <span class="ready">Ready</span>
      <button class="view on" aria-label="Normal view"><Icon n="vNormal" /></button>
      <button class="view" aria-label="Page layout view"><Icon n="vPage" /></button>
      <button class="view" aria-label="Page break view"><Icon n="vBreak" /></button>
      <button class="zb" aria-label="Zoom out"><Icon n="zMinus" /></button>
      <input v-model="zoom" type="range" min="0" max="100" aria-label="Zoom">
      <button class="zb" aria-label="Zoom in"><Icon n="zPlus" /></button>
      <span class="pc">100%</span>
    </section>

    <footer class="taskbar">
      <div class="center">
        <button class="start" aria-label="Start"><Icon n="win" /></button>
        <label class="pill"><Icon n="searchT" /><input type="text" placeholder="Search" aria-label="Taskbar search"><Icon n="bear" /></label>
        <button v-for="p in apps" :key="p[0]" class="app" :class="{ run: p[2], cur: p[2] === 2 }" :aria-label="p[1]"><Icon :n="p[0]" /></button>
      </div>
      <div class="tray">
        <button aria-label="Hidden icons"><Icon n="tChev" /></button>
        <button class="cl" aria-label="OneDrive"><Icon n="cloud" /></button>
        <button class="sys" aria-label="Network, volume, battery"><Icon n="wifi" /><Icon n="sound" /><Icon n="battery" /></button>
        <div class="clock"><span>9:03 PM</span><span>2/27/2024</span></div>
        <button aria-label="Notifications"><Icon n="bell" /></button>
      </div>
    </footer>
  </div>
</template>

<style>
body { margin: 0; }
</style>

<style scoped>
.desktop { display: flex; flex-direction: column; height: 100vh; overflow: hidden; background: #e6e6e6; color: #444; font: 11px/16px "Noto Sans", "Open Sans", sans-serif; }
.icon { display: block; flex: none; overflow: visible; }
button { margin: 0; padding: 0; border: 0; background: none; color: inherit; font: inherit; display: flex; align-items: center; justify-content: center; white-space: nowrap; }
input, select { box-sizing: border-box; margin: 0; padding: 0; border: 0; background: none; color: inherit; font: inherit; outline: 0; min-width: 0; }

.titlebar { display: grid; grid-template-columns: minmax(0, 784fr) 368px minmax(0, 768fr); height: 34px; flex: none; background: #217346; color: #fff; }
.tleft { display: flex; align-items: center; }
.qat { display: flex; align-items: center; width: 184px; box-sizing: border-box; padding-left: 18px; flex: none; }
.q { width: 22px; height: 34px; margin-right: 6px; }
.qc { width: 12px; height: 34px; margin-left: -3px; margin-right: 1px; }
.qx { width: 14px; height: 34px; margin-left: 8px; }
.doc { flex: 1; margin: 0; text-align: center; font-size: 11px; font-weight: 400; line-height: 32px; }
.tsearch { display: flex; align-items: center; height: 24px; margin-top: 5px; background: #9fcdb3; padding-left: 19px; gap: 15px; box-sizing: border-box; }
.tsearch input { flex: 1; color: #185c37; }
.tsearch input::placeholder { color: #185c37; opacity: 1; }
.tright { display: flex; align-items: center; justify-content: flex-end; background: radial-gradient(circle at right 50px bottom -4px, #23653f 10px, transparent 11px), radial-gradient(circle at right 460px top 20px, #236b43 20px, transparent 21px), linear-gradient(90deg, transparent calc(100% - 500px), #236640 calc(100% - 380px), #23633e calc(100% - 180px), #227045 calc(100% - 120px)); }
.user { margin-left: 9px; }
.avatar { width: 24px; height: 24px; line-height: 24px; text-align: center; border-radius: 50%; background: #015c4e; margin: 0 12px 0 11px; }
.wbtn { width: 46px; height: 30px; margin-bottom: 2px; }

.tabs { display: flex; align-items: center; height: 32px; flex: none; background: #f3f2f1; padding: 0 13px 0 17px; gap: 30px; font-size: 12px; }
.tab { height: 32px; position: relative; }
.tab.on { font-weight: 600; margin-left: 2px; }
.tab.on::after { content: ""; position: absolute; left: 0; right: 0; bottom: 4px; height: 3px; background: #217346; }
.share { margin-left: auto; width: 66px; height: 23px; margin-bottom: 2px; box-sizing: border-box; border: 1px solid #e1dfdd; border-radius: 2px; background: #fff; color: #217346; gap: 3px; font-weight: 500; }

.ribbon { display: flex; height: 94px; flex: none; background: #f3f2f1; padding-top: 2px; box-sizing: border-box; position: relative; box-shadow: 0 1px 5px rgba(0, 0, 0, .25); }
.div { width: 1px; height: 88px; background: #b5b3b1; flex: none; }
.group { display: flex; flex-direction: column; box-sizing: border-box; flex: none; }
.body { display: flex; height: 76px; }
.foot { display: flex; height: 16px; }
.foot span { flex: 1; text-align: center; }
.foot button { width: 18px; justify-content: flex-end; padding-right: 2px; box-sizing: border-box; }
.g-clip { width: 164px; } .g-clip .body { padding-left: 9px; }
.g-font { width: 231px; } .g-font .body { padding-left: 7px; }
.g-align { width: 279px; } .g-align .body { padding-left: 7px; }
.g-num { width: 155px; } .g-num .body { padding-left: 8px; }
.g-styles { flex: 1 0 auto; } .g-styles .body { padding-left: 7px; }
.g-cells { width: 142px; } .g-cells .body { padding-left: 8px; }
.g-edit { width: 199px; } .g-edit .body { padding-left: 10px; }
.collapse { width: 44px; flex: none; align-items: flex-end; justify-content: flex-end; padding: 0 8px 3px 0; box-sizing: border-box; }
.big { flex-direction: column; justify-content: flex-start; padding-top: 3px; height: 72px; }
.big > span:nth-child(2) { margin-top: 2px; }
.bl { display: flex; align-items: center; gap: 3px; height: 16px; }
.paste { width: 44px; margin-right: -3px; }
.w74 { width: 74px; } .w60 { width: 60px; } .w42 { width: 42px; } .w46 { width: 46px; }
.list { display: flex; flex-direction: column; }
.r24 .row { height: 24px; } .r23 .row { height: 23px; }
.r23 { width: 91px; margin-top: -1px; }
.row { justify-content: flex-start; }
.row i { width: 20px; display: flex; justify-content: center; margin-right: 2px; flex: none; }
.r23 .row i { width: 18px; margin-right: 3px; }
.far { margin-left: 10px; } .near { margin-left: 4px; }
.two { display: flex; flex-direction: column; gap: 8px; padding-top: 8px; box-sizing: border-box; }
.line { display: flex; align-items: center; height: 23px; }
.row.line i { width: 18px; }
.ic { width: 24px; height: 23px; font-size: 13px; box-sizing: border-box; }
.ic.on { background: #d2d0ce; border: 1px solid #999; width: 22px; margin: 0 1px; }
.ic em { font-family: "Liberation Serif", serif; font-size: 15px; }
.ch { width: 12px; height: 23px; }
.sep { width: 1px; height: 21px; background: #d0cecc; margin: 0 4px 0 5px; }
.sep.s3 { margin: 0 3px 0 4px; }
.fc { margin-left: 3px; }
.sym { font-size: 16px; width: 22px; } .pct { width: 32px; } .cm { width: 20px; }
.sel { position: relative; display: flex; height: 23px; }
.sel select { appearance: none; width: 100%; border: 1px solid #c8c6c4; background: #fff; color: #222; padding-left: 3px; }
.sel svg { position: absolute; right: 3px; top: 8px; pointer-events: none; }
.fname { width: 123px; margin: 0 2px 0 1px; } .fsize { width: 43px; margin-right: 1px; } .fnum { width: 140px; }
.tallsep { width: 1px; height: 59px; background: #d0cecc; margin: 6px 6px 0 3px; }

.gallery { display: flex; height: 62px; margin-top: 2px; box-sizing: border-box; border: 1px solid #d0cecc; background: #fff; }
.swatches { display: grid; grid-template-columns: repeat(5, 100px); grid-auto-rows: 22px; gap: 6px; padding: 5px 3px 0 4px; }
.sw { justify-content: flex-start; padding: 0 0 2px 3px; box-sizing: border-box; font-size: 13px; border: 1px solid transparent; }
.normal { color: #000; box-shadow: 0 0 0 2px #d0d0d0, 0 0 0 3px #8a8a8a; }
.bad { background: #ffc7ce; color: #9c0006; } .good { background: #c6efce; color: #006100; } .neutral { background: #ffeb9c; color: #9c5700; }
.calc { background: #f2f2f2; color: #fa7d00; border-color: #7f7f7f; font-weight: 700; font-size: 12px; }
.checkcell { background: #a5a5a5; color: #fff; border: 3px double #3f3f3f; font-weight: 700; font-size: 12px; padding-left: 1px; }
.expl { color: #7f7f7f; font-style: italic; }
.input { background: #ffcc99; color: #3f3f76; border-color: #7f7f7f; }
.linked { color: #fa7d00; border-bottom: 3px double #ff8001; padding-bottom: 0; }
.note { background: #ffffcc; color: #000; border-color: #b2b2b2; }
.gscroll { display: flex; flex-direction: column; width: 15px; margin: -1px -1px -1px 0; }
.gscroll button { flex: 1; border: 1px solid #ababab; background: #fdfdfd; }
.gscroll button.dis { border-color: #d0cecc; background: #f3f2f1; }

.fbar { display: flex; height: 47px; flex: none; padding: 11px 5px 0; box-sizing: border-box; }
.fbar label, .fbtns { height: 26px; box-sizing: border-box; border: 1px solid #c6c6c6; background: #fdfdfd; display: flex; align-items: center; font-size: 13px; }
.namebox { width: 102px; padding: 0 6px; }
.namebox input, .formula input { flex: 1; }
.dots { display: flex; flex-direction: column; gap: 2px; width: 30px; align-items: center; padding-top: 8px; box-sizing: border-box; }
.dots s { width: 2px; height: 2px; background: #a8a8a8; }
.fbtns { width: 110px; margin-right: 3px; }
.fbtns button { flex: 1; }
.fbtns .fx { font: italic 700 15px/20px "Liberation Serif", serif; color: #555; }
.fx sub { font-size: 11px; line-height: 10px; }
.formula { flex: 1; padding: 0 4px 0 11px; }

.sheet { flex: 1; min-height: 0; display: flex; }
.gridwrap { flex: 1; min-width: 0; overflow: hidden; border-bottom: 1px solid #999; box-sizing: border-box; }
table { table-layout: fixed; width: 100%; border-collapse: separate; border-spacing: 0; font-size: 12px; color: #000; }
.c0 { width: 26px; } .c1 { width: 64px; }
th, td { box-sizing: border-box; height: 20px; line-height: 18px; padding: 1px 0 0; overflow: hidden; }
th { font-weight: 400; }
thead th { border-right: 1px solid #b5b5b5; border-bottom: 1px solid #999; line-height: 17px; }
thead th.corner, thead th.end { border-right: 0; }
.corner svg { display: block; margin: 2px 0 0 10px; }
th.act { background: #d2d2d2; color: #217346; border-bottom: 2px solid #217346; }
tbody th { border-right: 1px solid #999; border-bottom: 1px solid #b5b5b5; }
td { background: #fff; border-right: 1px solid #d4d4d4; border-bottom: 1px solid #d4d4d4; text-align: right; padding-right: 2px; }
td:last-child { border-right-color: #999; }
.vscroll { width: 21px; flex: none; padding: 2px 3px 0; box-sizing: border-box; display: flex; flex-direction: column; }
.sb { width: 15px; height: 15px; flex: none; box-sizing: border-box; border: 1px solid #ababab; background: #fff; }
.vtrack { flex: 1; display: flex; flex-direction: column; background: #dadada; }
.before { flex: 258; } .after { flex: 215; }
.vthumb { flex: 271; border: 1px solid #ababab; background: #fff; box-sizing: border-box; }

.sheetbar { height: 27px; flex: none; display: flex; border-bottom: 1px solid #c6c6c6; padding-right: 21px; }
.navs { width: 100px; display: flex; padding-left: 15px; box-sizing: border-box; padding-bottom: 2px; }
.navs button { width: 28px; }
.stab { width: 189px; height: 25px; margin-top: -1px; padding-top: 3px; background: #fff; color: #217346; font-size: 12px; font-weight: 700; border: 1px solid #999; border-top: 0; border-bottom: 2px solid #217346; box-sizing: border-box; position: relative; }
.add { width: 82px; height: 26px; }
.sheetbar .dots { margin-left: auto; }
.hscroll { display: flex; flex: 0 1 730px; margin-top: 6px; height: 15px; }
.htrack { flex: 1; background: #dadada; display: flex; }
.hthumb { width: 96.5%; background: #fff; border: 1px solid #ababab; box-sizing: border-box; }

.status { height: 21px; flex: none; display: flex; align-items: center; background: #f3f2f1; border-bottom: 1px solid #ababab; padding: 0 8px 0 7px; }
.ready { flex: 1; line-height: 22px; }
.view { width: 40px; height: 21px; }
.view.on { background: #d0d0ce; }
.zb { width: 19px; height: 21px; }
.status input { appearance: none; width: 100px; height: 12px; background: linear-gradient(#b0b0b0, #b0b0b0) center / 100% 1px no-repeat; }
.status input::-webkit-slider-thumb { appearance: none; width: 5px; height: 11px; background: #777; }
.pc { width: 35px; text-align: right; }

.taskbar { height: 47px; flex: none; display: grid; grid-template-columns: 1fr auto 1fr; box-sizing: border-box; padding-bottom: 1px; background: linear-gradient(90deg, #dadad8 0, #dddad6 12%, #dadbd7 24%, #ddd8dc 34%, #dcd8dc 46%, #dadad7 52%, #dadad8 80%, #ddd9d6 82%, #dadad8 88%); color: #222; font-size: 12px; }
.center { grid-column: 2; display: flex; align-items: center; }
.start { width: 42px; height: 40px; }
.pill { display: flex; align-items: center; width: 218px; height: 30px; box-sizing: border-box; border: 1px solid #c9c7c9; border-radius: 15px; background: #f4f3f5; padding: 0 0 0 10px; margin: 0 5px 0 4px; font-size: 13px; }
.pill input { flex: 1; margin-left: 10px; }
.pill input::placeholder { color: #5a5a5a; opacity: 1; }
.app { width: 36px; height: 38px; margin: 0 4px; position: relative; border-radius: 4px; }
.run::after { content: ""; position: absolute; bottom: -1px; left: 15px; width: 6px; height: 3px; border-radius: 2px; background: #858585; }
.cur { background: #f0f0ef; box-shadow: 2px 0 0 #dadad8, 3px 0 0 #efefee; }
.cur::after { left: 10px; width: 16px; background: #744da9; }
.tray { display: flex; align-items: center; justify-content: flex-end; padding-right: 17px; }
.tray button { width: 20px; height: 40px; }
.tray .cl { margin: 0 8px 0 10px; width: 24px; }
.tray .sys { width: 74px; gap: 6px; }
.clock { display: flex; flex-direction: column; text-align: right; width: 67px; margin-right: 6px; padding-top: 2px; }
</style>
